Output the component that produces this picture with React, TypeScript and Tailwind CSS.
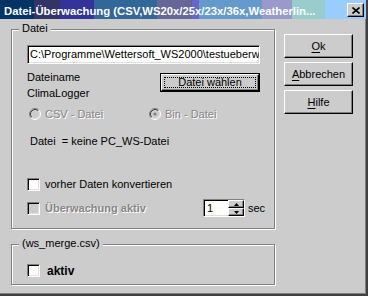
import React from "react";

const sunken =
  "border border-t-[#808080] border-l-[#808080] border-r-white border-b-white shadow-[inset_1px_1px_0_#000,inset_-1px_-1px_0_#dfdfdf]";
const raised =
  "border border-t-white border-l-white border-r-black border-b-black shadow-[inset_-1px_-1px_0_#808080]";
const etched = "border border-[#808080] shadow-[inset_1px_1px_0_#fff,1px_1px_0_#fff]";
const disabledText = "text-[#868686] [text-shadow:1px_1px_0_#fff]";

function Check({ disabled }: { disabled?: boolean }) {
  return (
    <span
      className={`block w-[13px] h-[13px] shrink-0 ${sunken} ${disabled ? "bg-[#cccccc]" : "bg-white"}`}
    />
  );
}

function Radio({ checked }: { checked?: boolean }) {
  return (
    <svg width="12" height="12" viewBox="0 0 12 12" className="shrink-0">
      <circle cx="6" cy="6" r="5" fill="#cccccc" />
      <path d="M2.11 9.89 A5.5 5.5 0 0 1 9.89 2.11" fill="none" stroke="#808080" />
      <path d="M9.89 2.11 A5.5 5.5 0 0 1 2.11 9.89" fill="none" stroke="#ffffff" />
      <path d="M2.82 9.18 A4.5 4.5 0 0 1 9.18 2.82" fill="none" stroke="#404040" />
      <path d="M9.18 2.82 A4.5 4.5 0 0 1 2.82 9.18" fill="none" stroke="#dfdfdf" />
      {checked && <circle cx="6" cy="6" r="1.6" fill="#808080" />}
    </svg>
  );
}

function Group({
  label,
  className,
  children,
}: {
  label: string;
  className: string;
  children: React.ReactNode;
}) {
  return (
    <div className={`relative ${etched} ${className}`}>
      <span className="absolute left-[7px] top-[-8px] px-[3px] bg-[#cccccc] leading-[13px]">
        {label}
      </span>
      {children}
    </div>
  );
}

function SideButton({ u, rest }: { u: string; rest: string }) {
  return (
    <button
      className={`w-[69px] h-[24px] bg-[#cccccc] ${raised} flex items-center justify-center leading-none`}
    >
      <span>
        <span className="underline underline-offset-[2px]">{u}</span>
        {rest}
      </span>
    </button>
  );
}

export default function App() {
  return (
    <div className="w-[368px] h-[296px] bg-[#cccccc] flex flex-col font-['Liberation_Sans',Arial,sans-serif] text-[11px] text-black shadow-[inset_-1px_-1px_0_#404040,inset_-2px_-2px_0_#404040,inset_-3px_-3px_0_#808080] overflow-hidden">
      {/* title bar */}
      <div className="h-[19px] w-[366px] flex items-start justify-between bg-[linear-gradient(90deg,#003366_0_34px,#333366_34px_60px,#333399_60px_94px,#336699_94px_157px,#666699_157px_192px,#6666cc_192px_199px,#6699cc_199px_262px,#9999cc_262px_292px,#99cccc_292px_325px,#99ccff_325px)]">
        <span className="pl-[4px] pt-[5px] leading-[13px] text-[11.3px] font-bold text-white whitespace-nowrap">
          Datei-Überwachung (CSV,WS20x/25x/23x/36x,Weatherlin...
        </span>
        <button
          className={`mt-[3px] mr-[2px] w-[17px] h-[14px] bg-[#cccccc] ${raised} flex items-center justify-center`}
        >
          <svg width="8" height="7" viewBox="0 0 8 7">
            <path d="M0.5 0.5 L7.5 6.5 M7.5 0.5 L0.5 6.5" stroke="#000" strokeWidth="1.6" />
          </svg>
        </button>
      </div>

      <div className="flex">
        {/* left column */}
        <div className="pl-[11px] pt-[10px] flex flex-col">
          <Group label="Datei" className="w-[264px] h-[200px] pl-[15px] pt-[15px] flex flex-col">
            <div
              className={`w-[233px] h-[19px] bg-white ${sunken} pl-[2px] leading-[17px] whitespace-nowrap overflow-hidden`}
            >
              C:\Programme\Wettersoft_WS2000\testueberw
            </div>

            <div className="flex mt-[5px]">
              <div className="w-[133px] flex flex-col leading-[16px]">
                <span>Dateiname</span>
                <span>ClimaLogger</span>
              </div>
              <button className="mt-[4px] w-[100px] h-[19px] border border-black bg-[#cccccc] p-0">
                <span className={`flex w-full h-full ${raised} p-[2px]`}>
                  <span className="flex-1 flex items-center justify-center border border-dotted border-black leading-none">
                    Datei wählen
                  </span>
                </span>
              </button>
            </div>

            <div className="flex items-center mt-[7px] h-[12px] pl-[2px]">
              <div className="w-[120px] flex items-center gap-[4px]">
                <Radio />
                <span className={disabledText}>CSV - Datei</span>
              </div>
              <div className="flex items-center gap-[4px]">
                <Radio checked />
                <span className={disabledText}>Bin - Datei</span>
              </div>
            </div>

            <span className="mt-[15px] pl-[3px] leading-[13px] whitespace-pre">
              Datei  = keine PC_WS-Datei
            </span>

            <div className="flex items-center gap-[5px] mt-[30px] h-[13px]">
              <Check />
              <span>vorher Daten konvertieren</span>
            </div>

            <div className="flex items-center mt-[8px] h-[18px]">
              <div className="w-[176px] flex items-center gap-[5px]">
                <Check disabled />
                <span className={`font-bold ${disabledText}`}>Überwachung aktiv</span>
              </div>
              <div className={`w-[42px] h-[18px] flex bg-white ${sunken}`}>
                <span className="flex-1 pl-[3px] leading-[16px]">1</span>
                <div className="w-[16px] flex flex-col">
                  <div className={`h-[8px] bg-[#cccccc] ${raised} flex items-center justify-center`}>
                    <svg width="5" height="3" viewBox="0 0 5 3">
                      <path d="M2.5 0 L5 3 L0 3 Z" fill="#000" />
                    </svg>
                  </div>
                  <div className={`h-[8px] bg-[#cccccc] ${raised} flex items-center justify-center`}>
                    <svg width="5" height="3" viewBox="0 0 5 3">
                      <path d="M0 0 L5 0 L2.5 3 Z" fill="#000" />
                    </svg>
                  </div>
                </div>
              </div>
              <span className="ml-[3px]">sec</span>
            </div>
          </Group>

          <Group label="(ws_merge.csv)" className="mt-[15px] w-[264px] h-[41px] pl-[15px] pt-[19px]">
            <div className="flex items-center gap-[7px] h-[13px]">
              <Check />
              <span className="font-bold text-[12px]">aktiv</span>
            </div>
          </Group>
        </div>

        {/* right column */}
        <div className="ml-[9px] pt-[15px] flex flex-col gap-[4px]">
          <SideButton u="O" rest="k" />
          <SideButton u="A" rest="bbrechen" />
          <SideButton u="H" rest="ilfe" />
        </div>
      </div>
    </div>
  );
}
